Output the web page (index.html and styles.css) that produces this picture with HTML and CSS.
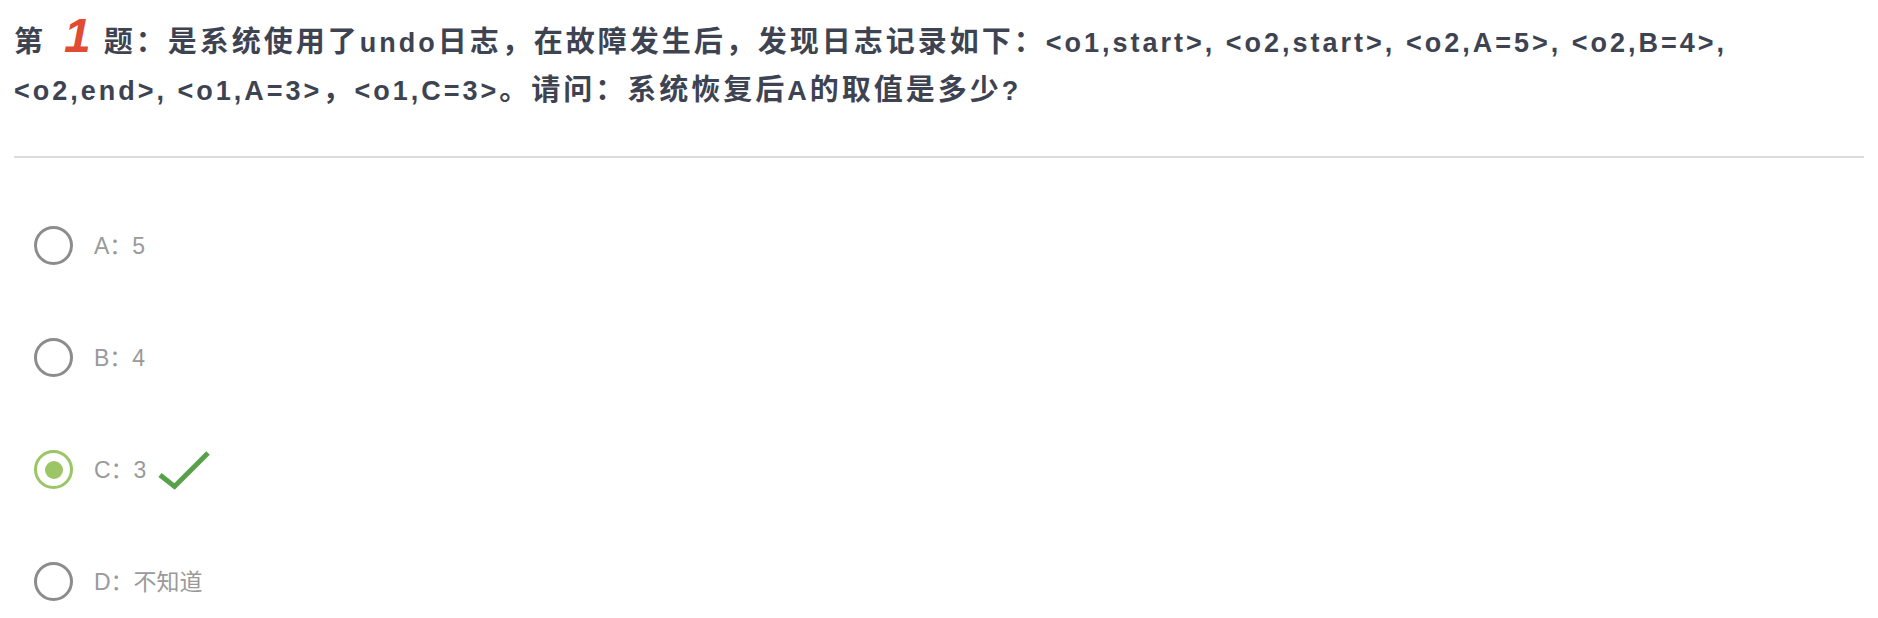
FILE: index.html
```html
<!DOCTYPE html>
<html lang="zh-CN">
<head>
<meta charset="utf-8">
<title>第 1 题</title>
<link rel="stylesheet" href="styles.css">
</head>
<body>
<div class="page">
  <div class="question">
    <h1 class="title">第<span class="num">1</span>题：是系统使用了<span class="en">undo</span>日志，在故障发生后，发现日志记录如下：<span class="en">&lt;o1,start&gt;, &lt;o2,start&gt;, &lt;o2,A=5&gt;, &lt;o2,B=4&gt;, &lt;o2,end&gt;, &lt;o1,A=3&gt;</span>，<span class="en">&lt;o1,C=3&gt;</span>。请问：系统恢复后<span class="en">A</span>的取值是多少<span class="en">?</span></h1>
  </div>
  <ul class="options">
    <li class="option"><span class="radio"></span><span class="label">A：5</span></li>
    <li class="option"><span class="radio"></span><span class="label">B：4</span></li>
    <li class="option"><span class="radio radio-on"><span class="dot"></span></span><span class="label">C：3</span><svg class="check" width="54" height="40" viewBox="0 0 54 40"><polyline points="3,25 17.5,36.5 51,3" fill="none" stroke="#58a04a" stroke-width="5"/></svg></li>
    <li class="option"><span class="radio"></span><span class="label">D：不知道</span></li>
  </ul>
</div>
</body>
</html>
```
FILE: styles.css
```css
html, body {
  margin: 0;
  padding: 0;
  background: #ffffff;
}

.page {
  padding: 0 14px;
  font-family: "Liberation Sans", "Noto Sans CJK SC", sans-serif;
}

.question {
  padding-top: 18px;
  padding-bottom: 42px;
  border-bottom: 2px solid #dcdcdc;
}

.title {
  margin: 0;
  font-size: 29px;
  line-height: 48px;
  font-weight: 700;
  letter-spacing: 3px;
  color: #3e4351;
}

.title .en {
  font-size: 27px;
  line-height: 1;
}

.title .num {
  font-size: 48px;
  line-height: 0;
  font-style: italic;
  font-weight: 700;
  color: #e14b31;
  margin: 0 13px 0 18px;
  letter-spacing: 0;
}

.options {
  list-style: none;
  margin: 68px 0 0 0;
  padding: 0 0 0 20px;
  display: flex;
  flex-direction: column;
  gap: 73px;
}

.option {
  display: flex;
  align-items: center;
  height: 39px;
}

.radio {
  box-sizing: border-box;
  width: 39px;
  height: 39px;
  border: 3px solid #8c8c8c;
  border-radius: 50%;
  display: flex;
  align-items: center;
  justify-content: center;
  flex: none;
}

.radio-on {
  border-color: #9cc566;
}

.dot {
  width: 18px;
  height: 18px;
  border-radius: 50%;
  background: #9cc566;
}

.label {
  margin-left: 21px;
  font-size: 23px;
  line-height: 26px;
  color: #9a9a9a;
}

.check {
  margin-left: 11px;
  display: block;
  flex: none;
}
```
